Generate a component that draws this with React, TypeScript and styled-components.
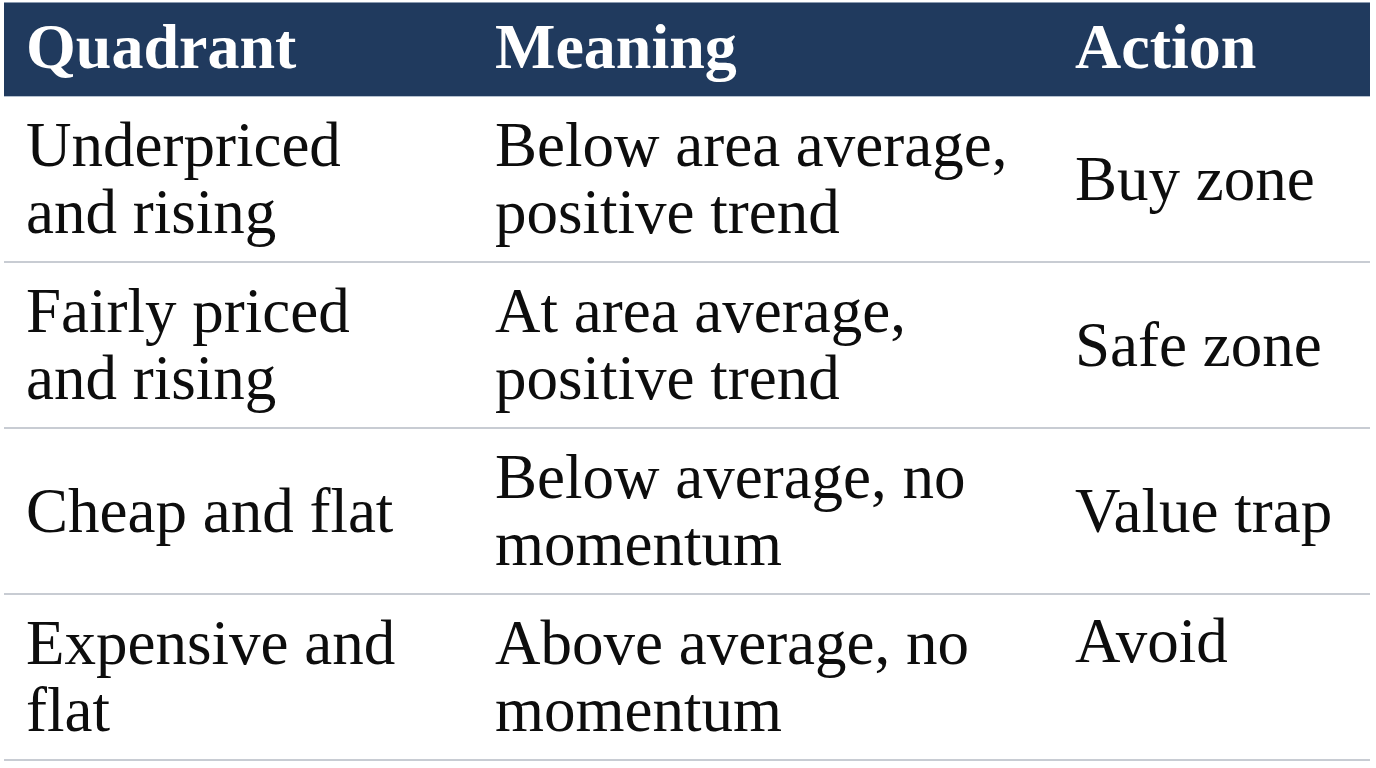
import React from "react";
import styled, { createGlobalStyle } from "styled-components";

const Global = createGlobalStyle`
  html, body { margin: 0; padding: 0; background: #ffffff; }
  body { font-family: "Liberation Serif", "Times New Roman", serif; }
`;

const Table = styled.div`
  margin: 2px 0 0 4px;
  width: 1366px;
  display: flex;
  flex-direction: column;
`;

const Grid = styled.div`
  display: grid;
  grid-template-columns: 469px 580px 1fr;
`;

const HeaderRow = styled(Grid)`
  background: #203a5e;
  border-top: 1px solid #8a9ab0;
  border-bottom: 1px solid #b4c0cf;
  height: 95px;
  box-sizing: border-box;
`;

const HeadCell = styled.div`
  padding: 10px 22px 0;
  color: #ffffff;
  font-size: 64px;
  font-weight: 700;
  line-height: 67px;
`;

const BodyRow = styled(Grid)`
  height: 166px;
  box-sizing: border-box;
  border-bottom: 2px solid #c8ccd3;
`;

const Cell = styled.div<{ $align?: "start" | "center" }>`
  align-self: ${(p) => (p.$align === "start" ? "start" : "center")};
  padding: 0 22px;
  color: #0d0d0d;
  font-size: 63px;
  line-height: 67px;
  ${(p) => (p.$align === "start" ? "padding-top: 13px;" : "")}
`;

type RowData = {
  quadrant: string[];
  meaning: string[];
  action: string;
  actionAlign?: "start" | "center";
};

const rows: RowData[] = [
  { quadrant: ["Underpriced", "and rising"], meaning: ["Below area average,", "positive trend"], action: "Buy zone" },
  { quadrant: ["Fairly priced", "and rising"], meaning: ["At area average,", "positive trend"], action: "Safe zone" },
  { quadrant: ["Cheap and flat"], meaning: ["Below average, no", "momentum"], action: "Value trap" },
  { quadrant: ["Expensive and", "flat"], meaning: ["Above average, no", "momentum"], action: "Avoid", actionAlign: "start" },
];

const Lines = ({ lines }: { lines: string[] }) => (
  <>
    {lines.map((l, i) => (
      <React.Fragment key={i}>
        {i > 0 && <br />}
        {l}
      </React.Fragment>
    ))}
  </>
);

export default function App() {
  return (
    <>
      <Global />
      <Table>
        <HeaderRow>
          <HeadCell>Quadrant</HeadCell>
          <HeadCell>Meaning</HeadCell>
          <HeadCell>Action</HeadCell>
        </HeaderRow>
        {rows.map((r, i) => (
          <BodyRow key={i}>
            <Cell>
              <Lines lines={r.quadrant} />
            </Cell>
            <Cell>
              <Lines lines={r.meaning} />
            </Cell>
            <Cell $align={r.actionAlign}>{r.action}</Cell>
          </BodyRow>
        ))}
      </Table>
    </>
  );
}
